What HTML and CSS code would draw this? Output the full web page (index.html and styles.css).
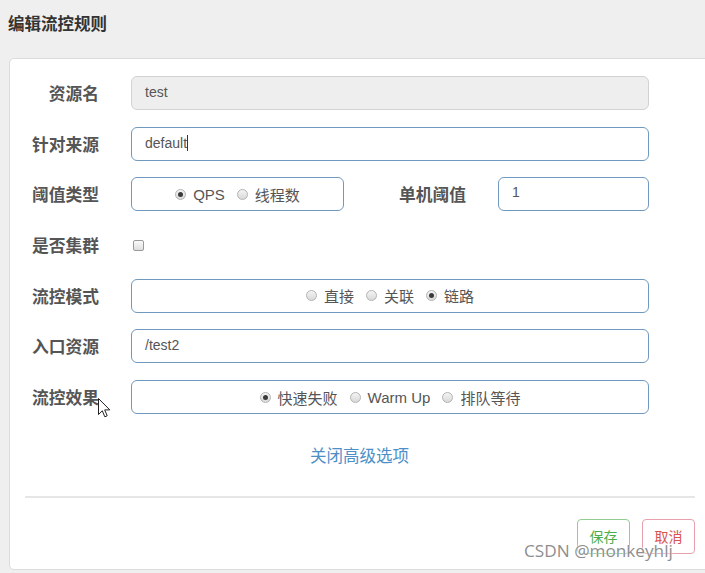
FILE: index.html
```html
<!DOCTYPE html>
<html lang="zh">
<head>
<meta charset="utf-8">
<title>编辑流控规则</title>
<link rel="stylesheet" href="styles.css">
</head>
<body>
<div class="page">
  <div class="modal-header">
    <h3 class="modal-title">编辑流控规则</h3>
  </div>
  <div class="card">
    <div class="form">
      <div class="row">
        <label class="lbl">资源名</label>
        <div class="input disabled">test</div>
      </div>
      <div class="row">
        <label class="lbl">针对来源</label>
        <div class="input">default<span class="caret"></span></div>
      </div>
      <div class="row">
        <label class="lbl">阈值类型</label>
        <div class="split">
          <div class="box small-box">
            <span class="radio checked"></span><span class="opt">QPS</span>
            <span class="radio"></span><span class="opt">线程数</span>
          </div>
          <label class="lbl lbl-inline">单机阈值</label>
          <div class="input small-input">1</div>
        </div>
      </div>
      <div class="row">
        <label class="lbl">是否集群</label>
        <div class="check-wrap"><span class="checkbox"></span></div>
      </div>
      <div class="row">
        <label class="lbl">流控模式</label>
        <div class="box">
          <span class="radio"></span><span class="opt">直接</span>
          <span class="radio"></span><span class="opt">关联</span>
          <span class="radio checked"></span><span class="opt">链路</span>
        </div>
      </div>
      <div class="row">
        <label class="lbl">入口资源</label>
        <div class="input">/test2</div>
      </div>
      <div class="row">
        <label class="lbl">流控效果</label>
        <div class="box">
          <span class="radio checked"></span><span class="opt">快速失败</span>
          <span class="radio"></span><span class="opt">Warm Up</span>
          <span class="radio"></span><span class="opt">排队等待</span>
        </div>
      </div>
    </div>
    <div class="link-row"><a class="adv-link">关闭高级选项</a></div>
    <div class="divider"></div>
    <div class="footer">
      <button class="btn btn-save">保存</button>
      <button class="btn btn-cancel">取消</button>
    </div>
  </div>
  <div class="watermark">CSDN @monkeyhlj</div>
  <svg class="cursor" width="13" height="21" viewBox="0 0 13 21">
    <path d="M0.5 0.5 L0.5 16.5 L4.3 12.8 L6.8 18.8 L9.2 17.8 L6.7 11.9 L11.8 11.9 Z" fill="#fff" stroke="#222" stroke-width="1" stroke-linejoin="round"/>
  </svg>
</div>
</body>
</html>
```

FILE: styles.css
```css
html, body {
  margin: 0;
  padding: 0;
  background: #efefef;
  overflow: hidden;
}
body {
  font-family: "Liberation Sans", "Noto Sans CJK SC", sans-serif;
  color: #555;
  width: 705px;
  height: 573px;
}
.page {
  position: relative;
  width: 705px;
  height: 573px;
  overflow: hidden;
}
.modal-header {
  padding: 15px 8px 25px;
}
.modal-title {
  margin: 0;
  font-size: 16.5px;
  line-height: 18px;
  font-weight: bold;
  color: #333;
}
.card {
  margin-left: 9px;
  width: 710px;
  height: 512px;
  box-sizing: border-box;
  background: #fff;
  border: 1px solid #dcdcdc;
  border-radius: 5px;
  padding-top: 17px;
}
.form {
  width: 639px;
  display: flex;
  flex-direction: column;
  gap: 16.7px;
}
.row {
  display: grid;
  grid-template-columns: 89px 518px;
  column-gap: 32px;
  align-items: center;
  height: 34px;
}
.lbl {
  text-align: right;
  font-size: 16.75px;
  font-weight: bold;
  color: #555;
  white-space: nowrap;
}
.input {
  height: 34px;
  box-sizing: border-box;
  border: 1px solid #7199c0;
  border-radius: 6px;
  padding: 0 13px;
  font-size: 14px;
  line-height: 30px;
  color: #555;
  background: #fff;
}
.input.disabled {
  background: #eeeeee;
  border-color: #d2d2d2;
}
.caret {
  display: inline-block;
  width: 1px;
  height: 16px;
  background: #333;
  vertical-align: -3px;
}
.split {
  display: flex;
  align-items: center;
}
.box {
  height: 34px;
  box-sizing: border-box;
  border: 1px solid #7199c0;
  border-radius: 6px;
  display: flex;
  align-items: center;
  justify-content: center;
  font-size: 15px;
  color: #555;
}
.small-box {
  width: 213px;
}
.lbl-inline {
  flex: 1;
  margin-right: 32px;
}
.small-input {
  width: 151px;
  padding-left: 13px;
  line-height: 28px;
}
.radio {
  width: 11px;
  height: 11px;
  box-sizing: border-box;
  border-radius: 50%;
  border: 1px solid #b3b3b3;
  background: linear-gradient(#f4f4f4, #d9d9d9);
  display: inline-flex;
  align-items: center;
  justify-content: center;
  margin-right: 7px;
}
.radio.checked::after {
  content: "";
  width: 5px;
  height: 5px;
  border-radius: 50%;
  background: #3a3a3a;
}
.opt {
  margin-right: 12px;
}
.opt:last-child {
  margin-right: 0;
}
.check-wrap {
  display: flex;
  align-items: center;
  padding-left: 2px;
}
.checkbox {
  width: 11px;
  height: 11px;
  box-sizing: border-box;
  border: 1px solid #9a9a9a;
  border-radius: 2px;
  background: linear-gradient(#fbfbfb, #dedede);
}
.link-row {
  width: 702px;
  text-align: left;
  padding-left: 300px;
  margin-top: 30px;
  height: 24px;
}
.adv-link {
  font-size: 16.5px;
  line-height: 24px;
  color: #4e8fc8;
  cursor: pointer;
}
.divider {
  margin: 28px 0 0 15px;
  width: 670px;
  height: 2px;
  background: #e6e6e6;
}
.footer {
  width: 685px;
  display: flex;
  justify-content: flex-end;
  gap: 12px;
  margin-top: 21px;
}
.btn {
  width: 53px;
  height: 35px;
  box-sizing: border-box;
  background: #fff;
  border-radius: 4px;
  font-family: "Noto Sans CJK SC", sans-serif;
  font-size: 14px;
  line-height: 20px;
  padding: 0 0 2px;
}
.btn-save {
  border: 1px solid #93cc93;
  color: #4cae4c;
}
.btn-cancel {
  border: 1px solid #e8a0ac;
  color: #d9534f;
}
.watermark {
  position: absolute;
  left: 524px;
  top: 539px;
  font-family: "Open Sans", "Liberation Sans", sans-serif;
  font-size: 17.2px;
  line-height: 24px;
  color: #8e8e8e;
  text-shadow: 0 0 2px #fff, 0 0 2px #fff;
  white-space: nowrap;
}
.cursor {
  position: absolute;
  left: 98px;
  top: 398px;
}
```
